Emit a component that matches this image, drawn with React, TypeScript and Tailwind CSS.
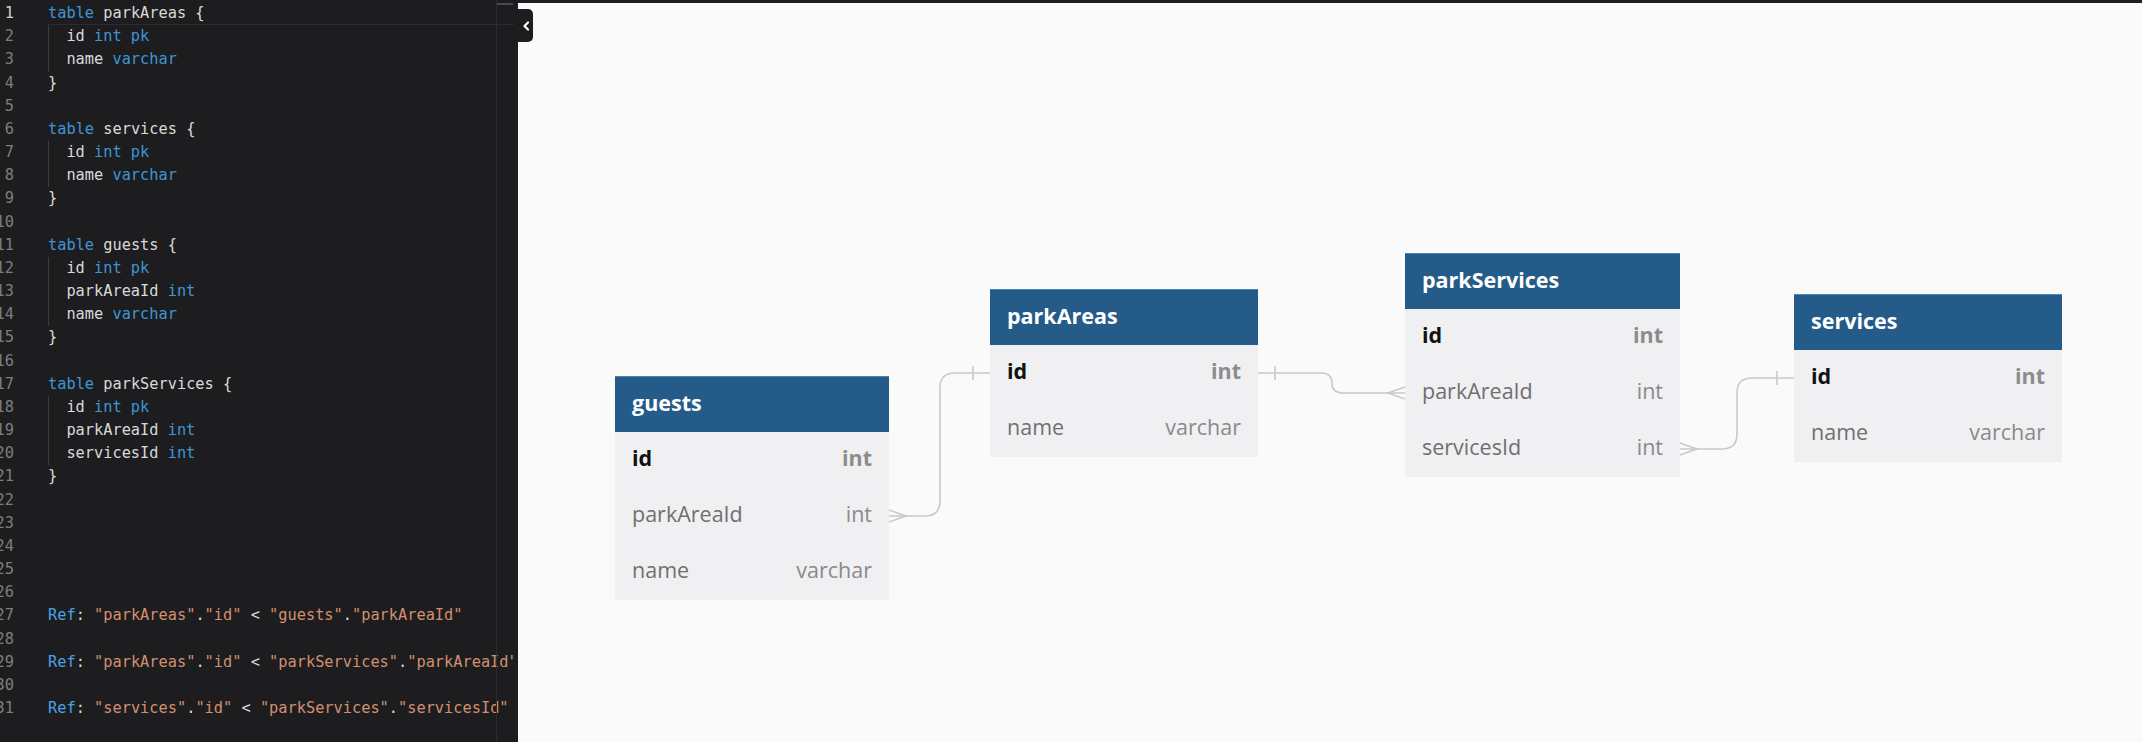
import React from "react";

type Tok = [string, string];

const W = "text-[#d9d9d9]";
const KW = "text-[#3d96d4]";
const REF = "text-[#4aa2e6]";
const STR = "text-[#d2906e]";

const code: { toks: Tok[]; indent?: boolean }[] = [
  { toks: [["table", KW], [" parkAreas {", W]] },
  { toks: [["id ", W], ["int pk", KW]], indent: true },
  { toks: [["name ", W], ["varchar", KW]], indent: true },
  { toks: [["}", W]] },
  { toks: [] },
  { toks: [["table", KW], [" services {", W]] },
  { toks: [["id ", W], ["int pk", KW]], indent: true },
  { toks: [["name ", W], ["varchar", KW]], indent: true },
  { toks: [["}", W]] },
  { toks: [] },
  { toks: [["table", KW], [" guests {", W]] },
  { toks: [["id ", W], ["int pk", KW]], indent: true },
  { toks: [["parkAreaId ", W], ["int", KW]], indent: true },
  { toks: [["name ", W], ["varchar", KW]], indent: true },
  { toks: [["}", W]] },
  { toks: [] },
  { toks: [["table", KW], [" parkServices {", W]] },
  { toks: [["id ", W], ["int pk", KW]], indent: true },
  { toks: [["parkAreaId ", W], ["int", KW]], indent: true },
  { toks: [["servicesId ", W], ["int", KW]], indent: true },
  { toks: [["}", W]] },
  { toks: [] },
  { toks: [] },
  { toks: [] },
  { toks: [] },
  { toks: [] },
  {
    toks: [
      ["Ref", REF],
      [": ", W],
      ['"parkAreas"', STR],
      [".", W],
      ['"id"', STR],
      [" < ", W],
      ['"guests"', STR],
      [".", W],
      ['"parkAreaId"', STR],
    ],
  },
  { toks: [] },
  {
    toks: [
      ["Ref", REF],
      [": ", W],
      ['"parkAreas"', STR],
      [".", W],
      ['"id"', STR],
      [" < ", W],
      ['"parkServices"', STR],
      [".", W],
      ['"parkAreaId"', STR],
    ],
  },
  { toks: [] },
  {
    toks: [
      ["Ref", REF],
      [": ", W],
      ['"services"', STR],
      [".", W],
      ['"id"', STR],
      [" < ", W],
      ['"parkServices"', STR],
      [".", W],
      ['"servicesId"', STR],
    ],
  },
];

type Field = { name: string; type: string; pk?: boolean };

const tables: { name: string; x: number; y: number; w: number; fields: Field[] }[] = [
  {
    name: "guests",
    x: 615,
    y: 376,
    w: 274,
    fields: [
      { name: "id", type: "int", pk: true },
      { name: "parkAreaId", type: "int" },
      { name: "name", type: "varchar" },
    ],
  },
  {
    name: "parkAreas",
    x: 990,
    y: 289,
    w: 268,
    fields: [
      { name: "id", type: "int", pk: true },
      { name: "name", type: "varchar" },
    ],
  },
  {
    name: "parkServices",
    x: 1405,
    y: 253,
    w: 275,
    fields: [
      { name: "id", type: "int", pk: true },
      { name: "parkAreaId", type: "int" },
      { name: "servicesId", type: "int" },
    ],
  },
  {
    name: "services",
    x: 1794,
    y: 294,
    w: 268,
    fields: [
      { name: "id", type: "int", pk: true },
      { name: "name", type: "varchar" },
    ],
  },
];

// canvas origin in page coords
const OX = 518;
const OY = 3;

function Editor() {
  return (
    <div className="relative w-[518px] shrink-0 h-[742px] overflow-hidden bg-[#1d1d1f] font-['DejaVu_Sans_Mono',monospace] text-[15.3px] leading-[23.18px] pt-[2px]">
      {code.map((line, i) => (
        <div key={i} className="flex h-[23.18px] whitespace-pre">
          <div className="w-[14px] shrink-0 flex justify-end">
            <span className={i === 0 ? "text-[#d0d0d0]" : "text-[#7e7e7e]"}>{i + 1}</span>
          </div>
          <div className="ml-[34px] w-[466px] overflow-hidden">
            {line.indent ? (
              <div className="border-l border-[#3c3c3c] pl-[17.4px] h-full">
                {line.toks.map(([t, c], j) => (
                  <span key={j} className={c}>
                    {t}
                  </span>
                ))}
              </div>
            ) : (
              <div className={i === 0 ? "h-full border-b border-[#2c2c2e]" : "h-full"}>
                {line.toks.map(([t, c], j) => (
                  <span key={j} className={c}>
                    {t}
                  </span>
                ))}
              </div>
            )}
          </div>
        </div>
      ))}
      <div className="absolute left-[496px] top-0 bottom-0 w-px bg-[#2c2c2e]" />
      <div className="absolute left-[497px] top-[3px] w-[16px] h-[2px] bg-[#4a4a4c]" />
    </div>
  );
}

function DbTable({ t }: { t: (typeof tables)[number] }) {
  return (
    <div
      className="absolute font-['Open_Sans',sans-serif] text-[21.5px]"
      style={{ left: t.x - OX, top: t.y - OY, width: t.w }}
    >
      <div className="h-[56px] flex items-center px-[17px] pb-[3px] bg-[#255b88] border-t border-[#4f84b0] text-white font-bold">
        {t.name}
      </div>
      <div className="bg-[#f0eff2]">
        {t.fields.map((f) => (
          <div key={f.name} className="h-[56px] flex items-center justify-between px-[17px] pb-[3px]">
            <span className={f.pk ? "font-bold text-[#111111]" : "text-[#6f6f6f]"}>{f.name}</span>
            <span className={f.pk ? "font-bold text-[#8c8c8c]" : "text-[#8a8a8a]"}>{f.type}</span>
          </div>
        ))}
      </div>
    </div>
  );
}

function Connectors() {
  const s = { stroke: "#c9c9c9", strokeWidth: 1.6, fill: "none" };
  return (
    <svg
      className="absolute inset-0"
      width={2142 - OX}
      height={742 - OY}
      viewBox={`${OX} ${OY} ${2142 - OX} ${742 - OY}`}
    >
      {/* guests.parkAreaId > parkAreas.id */}
      <path {...s} d="M889 516 H925 Q940 516 940 501 V388 Q940 373 955 373 H990" />
      <path {...s} d="M889 510 L906 516 L889 522" />
      <path {...s} d="M973 366 V380" />
      {/* parkAreas.id < parkServices.parkAreaId */}
      <path {...s} d="M1258 373 H1321 Q1332 373 1332 383 Q1332 393 1343 393 H1405" />
      <path {...s} d="M1275 366 V380" />
      <path {...s} d="M1405 387 L1388 393 L1405 399" />
      {/* parkServices.servicesId > services.id */}
      <path {...s} d="M1680 449 H1722 Q1737 449 1737 434 V393 Q1737 378 1752 378 H1794" />
      <path {...s} d="M1680 443 L1697 449 L1680 455" />
      <path {...s} d="M1777 371 V385" />
    </svg>
  );
}

export default function App() {
  return (
    <div className="flex w-[2142px] h-[742px] overflow-hidden bg-[#1d1d1f]">
      <Editor />
      <div className="relative flex-1 h-[742px] bg-[#fafafa] border-t-[3px] border-[#1b1e22]">
        <Connectors />
        {tables.map((t) => (
          <DbTable key={t.name} t={t} />
        ))}
        <div className="absolute left-0 top-[6px] w-[15px] h-[33px] rounded-r-[5px] bg-[#1d1d1f] flex items-center justify-center">
          <svg width="8" height="10" viewBox="0 0 8 10">
            <path d="M6 1.5 L2.5 5 L6 8.5" stroke="#ffffff" strokeWidth="2.2" fill="none" strokeLinecap="round" strokeLinejoin="round" />
          </svg>
        </div>
      </div>
    </div>
  );
}
